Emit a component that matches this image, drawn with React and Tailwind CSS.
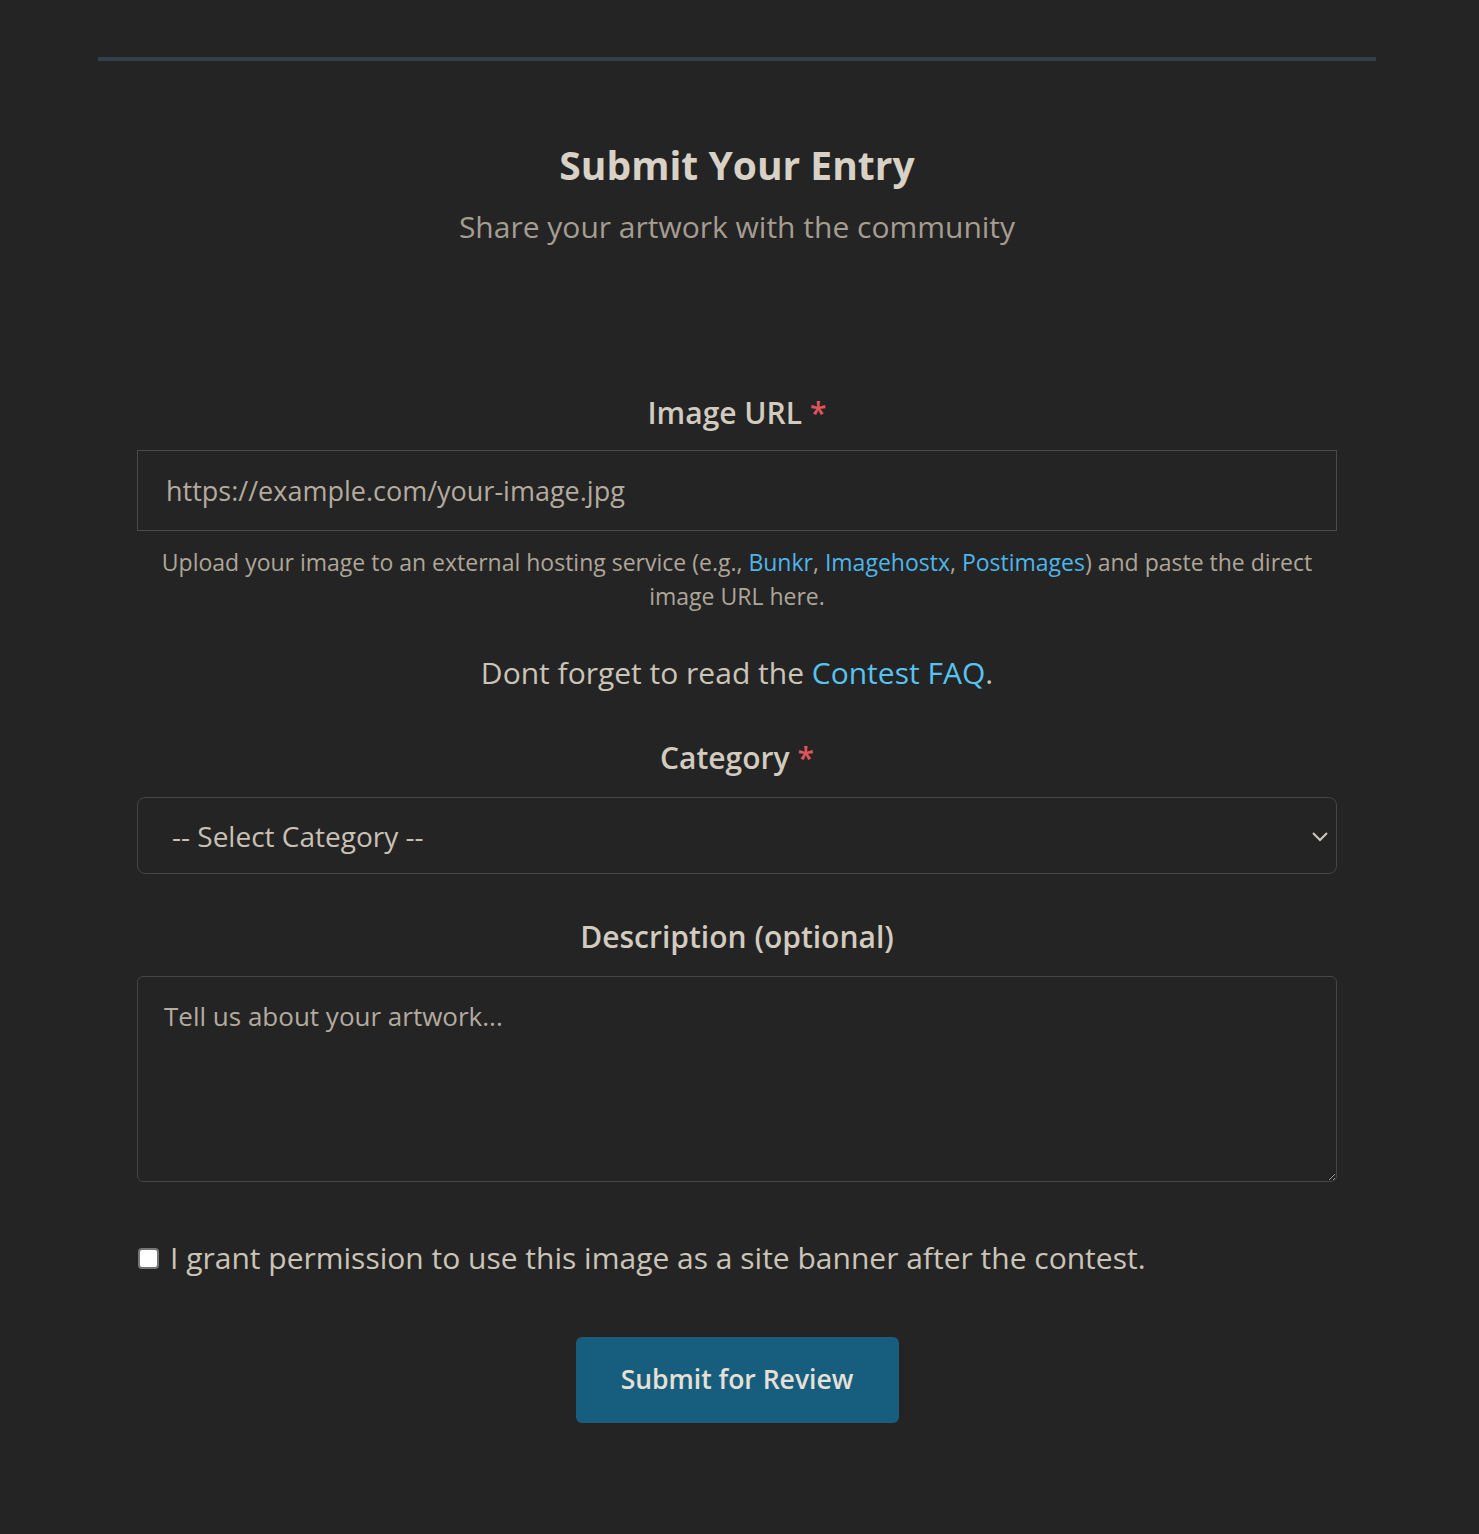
import React, { useState } from 'react';

const font = { fontFamily: '"Open Sans", "Noto Sans", sans-serif' };

const Label = ({ children, required, className = '' }) => (
  <label className={`block text-center text-[30px] leading-[40px] font-semibold text-[#d2cbbf] ${className}`}>
    {children}
    {required && <span className="ml-[8px] text-[#e0555a]">*</span>}
  </label>
);

export default function App() {
  const [url, setUrl] = useState('');
  const [category, setCategory] = useState('');
  const [description, setDescription] = useState('');
  const [banner, setBanner] = useState(false);

  return (
    <div className="min-h-screen bg-[#242424] pt-[57px] pb-[111px] pr-[5px]" style={font}>
      {/* Top divider */}
      <div className="mx-auto w-[1278px] h-[4px] bg-[#343e4c]" />

      {/* Header */}
      <div className="mt-[80px] text-center">
        <h1 className="text-[39px] leading-[48px] font-bold text-[#d8d1c6]">Submit Your Entry</h1>
        <p className="mt-[18px] text-[30px] leading-[40px] text-[#a59d91]">Share your artwork with the community</p>
      </div>

      {/* Form */}
      <form className="mx-auto mt-[146px] w-[1200px]" onSubmit={(e) => e.preventDefault()}>
        <Label required>Image URL</Label>
        <input
          type="url"
          value={url}
          onChange={(e) => setUrl(e.target.value)}
          placeholder="https://example.com/your-image.jpg"
          className="mt-[17px] block w-full h-[81px] px-[28px] bg-[#242424] border border-[#4a4a4a] text-[27px] text-[#c4bcb0] placeholder:text-[#b3ab9f] outline-none"
        />
        <p className="mt-[14px] text-center text-[23px] leading-[34px] text-[#aea699]">
          Upload your image to an external hosting service (e.g.,{' '}
          <a href="#" className="text-[#4fb6ea]">Bunkr</a>,{' '}
          <a href="#" className="text-[#4fb6ea]">Imagehostx</a>,{' '}
          <a href="#" className="text-[#4fb6ea]">Postimages</a>) and paste the direct image URL here.
        </p>

        <p className="mt-[40px] text-center text-[30px] leading-[40px] text-[#cbc4b8]">
          Dont forget to read the <a href="#" className="text-[#58c3ef]">Contest FAQ</a>.
        </p>

        <Label required className="mt-[45px]">Category</Label>
        <div className="relative mt-[19px]">
          <select
            value={category}
            onChange={(e) => setCategory(e.target.value)}
            className="block w-full h-[77px] pl-[34px] pr-[60px] appearance-none bg-[#242424] border border-[#454545] rounded-[8px] text-[28px] text-[#c9c1b5] outline-none"
          >
            <option value="">-- Select Category --</option>
            <option value="digital">Digital Art</option>
            <option value="traditional">Traditional</option>
            <option value="photo">Photography</option>
          </select>
          <svg
            className="pointer-events-none absolute right-[8px] top-1/2 -translate-y-1/2"
            width="18"
            height="12"
            viewBox="0 0 18 12"
            fill="none"
          >
            <path d="M2 3l7 7 7-7" stroke="#d0c9bd" strokeWidth="2" />
          </svg>
        </div>

        <Label className="mt-[43px]">Description (optional)</Label>
        <textarea
          value={description}
          onChange={(e) => setDescription(e.target.value)}
          placeholder="Tell us about your artwork..."
          className="mt-[19px] block w-full h-[206px] px-[26px] py-[19px] bg-[#242424] border border-[#454545] rounded-[6px] text-[26px] leading-[40px] text-[#c4bcb0] placeholder:text-[#b3ab9f] outline-none resize-y"
        />

        <label className="mt-[56px] flex items-center h-[40px] cursor-pointer">
          <input
            type="checkbox"
            checked={banner}
            onChange={(e) => setBanner(e.target.checked)}
            className="appearance-none shrink-0 w-[21px] h-[21px] ml-[1px] bg-white border-2 border-[#767676] rounded-[4px] checked:bg-[#175e7e]"
          />
          <span className="ml-[11px] text-[30px] leading-[40px] text-[#cbc4b8]">
            I grant permission to use this image as a site banner after the contest.
          </span>
        </label>

        <div className="mt-[59px] flex justify-center">
          <button
            type="submit"
            className="w-[323px] h-[86px] rounded-[6px] bg-[#175e7e] text-[26.5px] font-semibold text-[#e6e0d6]"
          >
            Submit for Review
          </button>
        </div>
      </form>
    </div>
  );
}
